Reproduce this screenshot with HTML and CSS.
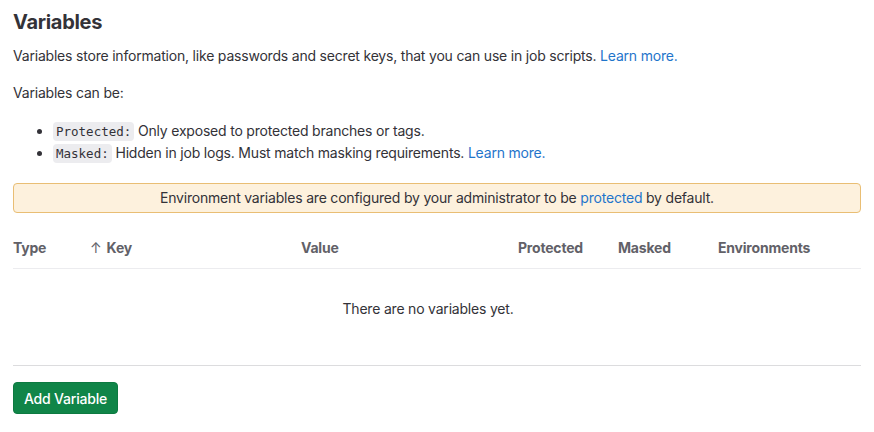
FILE: index.html
```html
<!DOCTYPE html>
<html>
<head>
<meta charset="utf-8">
<link rel="stylesheet" href="styles.css">
</head>
<body>
<div class="page">
  <h2 class="title">Variables</h2>
  <p class="intro">Variables store information, like passwords and secret keys, that you can use in job scripts. <a class="link" href="#">Learn more.</a></p>
  <p class="intro">Variables can be:</p>
  <ul class="list">
    <li><code class="code">Protected:</code> Only exposed to protected branches or tags.</li>
    <li><code class="code">Masked:</code> Hidden in job logs. Must match masking requirements. <a class="link" href="#">Learn more.</a></li>
  </ul>
  <div class="alert">Environment variables are configured by your administrator to be <a class="link" href="#">protected</a> by default.</div>
  <div class="table">
    <div class="thead">
      <div class="th">Type</div>
      <div class="th"><span class="arrow">↑</span> Key</div>
      <div class="th">Value</div>
      <div class="th">Protected</div>
      <div class="th">Masked</div>
      <div class="th">Environments</div>
    </div>
    <div class="empty">There are no variables yet.</div>
  </div>
  <div class="actions">
    <button class="btn">Add Variable</button>
  </div>
</div>
</body>
</html>
```
FILE: styles.css
```css
* { box-sizing: border-box; }
body {
  margin: 0;
  background: #fff;
  font-family: Inter, "Liberation Sans", sans-serif;
  font-size: 14px;
  letter-spacing: -0.2px;
  color: #333238;
}
.page {
  padding: 0 13px;
}
.title {
  margin: 10px 0 12px;
  font-size: 20px;
  line-height: 24px;
  font-weight: 700;
  letter-spacing: -0.3px;
  color: #333238;
}
.intro {
  margin: 0 0 17px;
  line-height: 20px;
}
.link {
  color: #1f75cb;
  text-decoration: none;
}
.list {
  margin: 0;
  padding-left: 40px;
}
.list li {
  line-height: 21px;
}
.code {
  font-family: "DejaVu Sans Mono", "Liberation Mono", monospace;
  font-size: 12.5px;
  letter-spacing: 0;
  background: #ececef;
  border-radius: 4px;
  padding: 2px 3px;
  color: #333238;
}
.alert {
  margin-top: 19px;
  padding: 4px 16px;
  background: #fdf1dd;
  border: 1px solid #e9be74;
  border-radius: 4px;
  text-align: center;
  line-height: 20px;
}
.table {
  margin-top: 15px;
  border-bottom: 1px solid #dcdcde;
}
.thead {
  display: grid;
  grid-template-columns: 77px 211px 217px 100px 100px 1fr;
  height: 41px;
  align-items: center;
  border-bottom: 1px solid #ececef;
}
.th {
  font-weight: 700;
  color: #626168;
  line-height: 20px;
}
.arrow {
  font-weight: 400;
  margin-right: 2px;
}
.empty {
  text-align: center;
  line-height: 20px;
  padding: 30px 18px 46px 0;
}
.actions {
  padding-top: 16px;
}
.btn {
  font-family: Inter, "Liberation Sans", sans-serif;
  font-size: 14px;
  font-weight: 500;
  letter-spacing: -0.2px;
  height: 32px;
  padding: 0 10px;
  background: #108548;
  color: #fff;
  border: 1px solid #0d7a41;
  border-radius: 4px;
}
```
